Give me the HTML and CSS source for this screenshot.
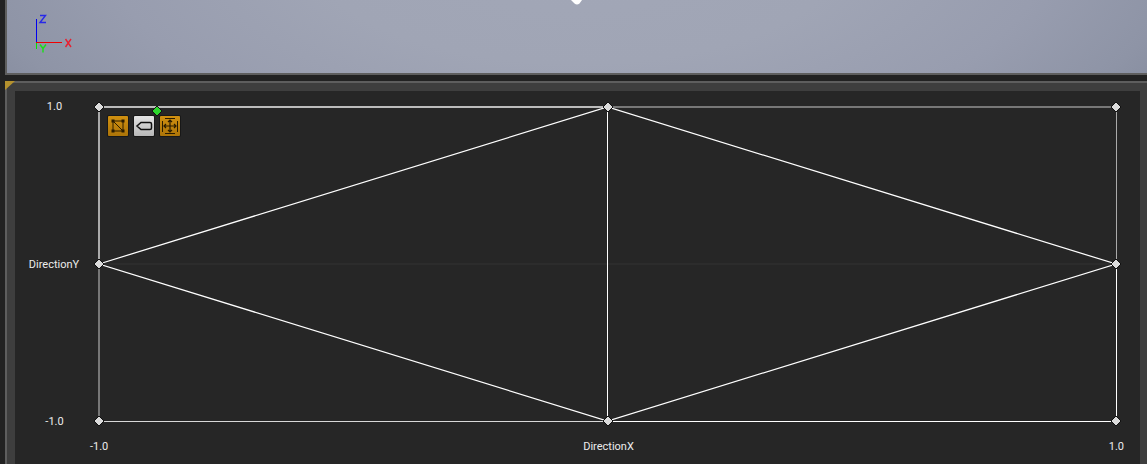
FILE: index.html
```html
<!DOCTYPE html>
<html lang="en">
<head>
<meta charset="utf-8">
<title>Blend Space Editor</title>
<link rel="stylesheet" href="styles.css">
</head>
<body>
<main class="editor">
  <section class="viewport" aria-label="Preview viewport">
    <svg class="gizmo" viewBox="0 0 42 42" aria-label="Axes">
      <path d="M2.500 6V30" stroke="#0000f0"/>
      <path d="M2 29.500H28" stroke="#f00000"/>
      <path d="M2.500 30V36" stroke="#00e600"/>
      <g stroke-width="1.400">
        <path d="M6 2.500H11.500L6 9.500H12" stroke="#2828e8"/>
        <path d="M31.500 26L37 34M37 26L31.500 34" stroke="#e82030"/>
        <path d="M6 31.500L9 35.500L12 31.500M9 35.500V39.500" stroke="#18e018"/>
      </g>
    </svg>
    <svg class="figure" viewBox="0 0 12 5" aria-hidden="true"><path d="M0 0H11L8.500 3.500Q6 5.500 3.500 3.500Z" fill="#fff"/></svg>
  </section>
  <section class="panel" aria-label="Blend space">
    <svg class="corner" viewBox="0 0 10 10" aria-hidden="true"><path d="M0 0H10L0 9Z" fill="#b4912e"/></svg>
    <div class="graph">
      <div class="y-axis"><span>1.0</span><span class="name">DirectionY</span><span>-1.0</span></div>
      <div class="plot">
        <svg class="mesh" viewBox="0 0 100 100" preserveAspectRatio="none" aria-hidden="true">
          <path class="grid-line" d="M0 50H100"/>
          <path class="edge wide bright" d="M0 0H50"/>
          <path class="edge wide soft" d="M0 0V50"/>
          <path class="edge wide dim" d="M0 50V100M50 0H100"/>
          <path class="edge soft" d="M100 0V50"/>
          <path class="edge pale" d="M50 100H0"/>
          <path class="edge" d="M50 0V100M50 100H100V50"/>
          <path class="slope" d="M0 50L50 0L100 50L50 100Z"/>
        </svg>
        <svg class="node left top" viewBox="0 0 12 12"><path d="M6 1L11 6L6 11L1 6Z"/></svg>
        <svg class="node center top" viewBox="0 0 12 12"><path d="M6 1L11 6L6 11L1 6Z"/></svg>
        <svg class="node right top" viewBox="0 0 12 12"><path d="M6 1L11 6L6 11L1 6Z"/></svg>
        <svg class="node left middle" viewBox="0 0 12 12"><path d="M6 1L11 6L6 11L1 6Z"/></svg>
        <svg class="node right middle" viewBox="0 0 12 12"><path d="M6 1L11 6L6 11L1 6Z"/></svg>
        <svg class="node left bottom" viewBox="0 0 12 12"><path d="M6 1L11 6L6 11L1 6Z"/></svg>
        <svg class="node center bottom" viewBox="0 0 12 12"><path d="M6 1L11 6L6 11L1 6Z"/></svg>
        <svg class="node right bottom" viewBox="0 0 12 12"><path d="M6 1L11 6L6 11L1 6Z"/></svg>
        <svg class="node preview" viewBox="0 0 12 12"><path d="M6 1L11 6L6 11L1 6Z"/></svg>
        <div class="tools">
          <button class="tool active" type="button" aria-label="Show triangulation">
            <svg viewBox="0 0 20 20"><path d="M5 5H15V15H5ZM5 5L15 15" fill="none" stroke="#2a1c00"/><path d="M3.500 3.500h3v3h-3zM13.500 3.500h3v3h-3zM3.500 13.500h3v3h-3zM13.500 13.500h3v3h-3z" fill="#2a1c00"/></svg>
          </button>
          <button class="tool" type="button" aria-label="Show sample names">
            <svg viewBox="0 0 20 20"><path d="M7 6.500H16Q17.500 6.500 17.500 8V12Q17.500 13.500 16 13.500H7L3 10Z" fill="none" stroke="#111" stroke-width="1.500"/></svg>
          </button>
          <button class="tool active" type="button" aria-label="Stretch to fit">
            <svg viewBox="0 0 20 20"><path d="M2.500 5V16M17.500 5V16M5 2.500H15M5 17.500H15" fill="none" stroke="#2a1c00"/><path d="M10 4V16M4 10H16M8 6L10 4L12 6M8 14L10 16L12 14M6 8L4 10L6 12M14 8L16 10L14 12" fill="none" stroke="#2a1c00" stroke-width="1.200"/></svg>
          </button>
        </div>
      </div>
      <div class="x-axis"><span>-1.0</span><span>DirectionX</span><span>1.0</span></div>
    </div>
  </section>
</main>
</body>
</html>
```
FILE: styles.css
```css
* { box-sizing: border-box; }
body { margin: 0; background: #222; color: #ececec; font: 11px/14px Roboto, sans-serif; }
.editor { display: flex; flex-direction: column; gap: 6px; height: 100vh; padding-left: 5px; overflow: hidden; }
.viewport {
  position: relative;
  flex: 0 0 75px;
  border: solid #5e5e5e;
  border-width: 0 0 2px 2px;
  background: radial-gradient(ellipse 66% 420% at 50% -60%, #a2a7b7 0%, #a0a5b5 35%, #989daf 62%, #8e94a6 80%, #7c8395 100%);
}
.gizmo { position: absolute; left: 27px; top: 13px; width: 42px; height: 42px; fill: none; }
.figure { position: absolute; left: 50%; top: 0; width: 12px; height: 5px; transform: translateX(-50%); }
.panel {
  position: relative;
  flex: 1;
  display: flex;
  padding: 8px 7px 0 8px;
  border: solid #5e5e5e;
  border-width: 2px 0 0 2px;
  background: #3e3e3e;
}
.corner { position: absolute; left: -2px; top: -2px; width: 10px; height: 10px; }
.graph {
  flex: 1;
  display: grid;
  grid-template: 1fr 43px / 84px 1fr;
  padding: 16px 24px 0 0;
  background: #262626;
}
.y-axis { display: flex; flex-direction: column; justify-content: space-between; align-items: center; margin: -7px 5px -8px 0; }
.y-axis .name { padding-right: 1px; }
.plot { position: relative; }
.mesh { display: block; position: absolute; width: 100%; height: 100%; overflow: visible; }
.mesh path { fill: none; vector-effect: non-scaling-stroke; }
.grid-line { stroke: #333; }
.edge { stroke: #fff; shape-rendering: crispEdges; }
.wide { stroke-width: 2px; }
.bright { stroke: #bbb; }
.pale { stroke: #d8d8d8; }
.soft { stroke: #aaa; }
.dim { stroke: #777; }
.slope { stroke: #fff; stroke-width: 1.250px; }
.node { position: absolute; width: 12px; height: 12px; transform: translate(-50%, -50%); overflow: visible; }
.node path { fill: #dcdcdc; stroke: #111; }
.left { left: 0; }
.center { left: 50%; }
.right { left: 100%; }
.top { top: 0; }
.middle { top: 50%; }
.bottom { top: 100%; }
.preview { left: 5.700%; top: 1.300%; }
.preview path { fill: #2cd62c; }
.tools { position: absolute; left: 9px; top: 9px; display: flex; gap: 6px; }
.tool { width: 20px; height: 20px; padding: 0; border: 0; border-radius: 1px; background: linear-gradient(#e4e4e4, #b8b8b8); box-shadow: 0 0 0 1px #181818; }
.tool.active { background: linear-gradient(#d09010, #ac7408); }
.tool svg { display: block; }
.x-axis { grid-column: 2; display: flex; justify-content: space-between; margin: 19px -8px 0 -9px; }
```
